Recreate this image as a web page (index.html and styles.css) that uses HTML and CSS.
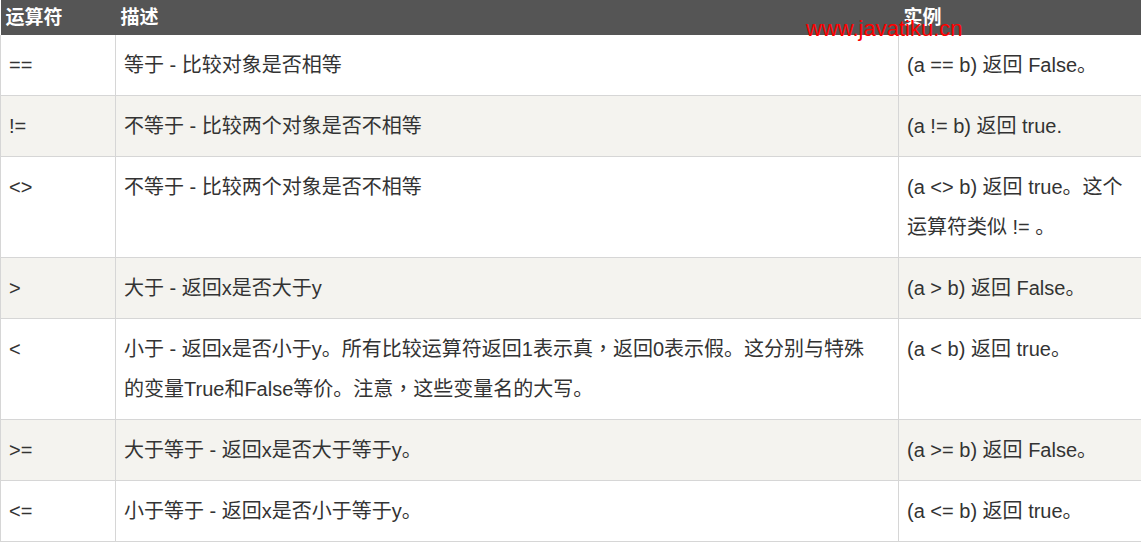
FILE: index.html
```html
<!DOCTYPE html>
<html lang="zh-CN">
<head>
<meta charset="utf-8">
<title>比较运算符</title>
<link rel="stylesheet" href="styles.css">
</head>
<body>
<div class="wrap">
  <table class="ops">
    <colgroup>
      <col class="c-op">
      <col class="c-desc">
      <col class="c-ex">
    </colgroup>
    <thead>
      <tr><th>运算符</th><th>描述</th><th>实例</th></tr>
    </thead>
    <tbody>
      <tr><td>==</td><td>等于 - 比较对象是否相等</td><td>(a == b) 返回 False。</td></tr>
      <tr><td>!=</td><td>不等于 - 比较两个对象是否不相等</td><td>(a != b) 返回 true.</td></tr>
      <tr><td>&lt;&gt;</td><td>不等于 - 比较两个对象是否不相等</td><td>(a &lt;&gt; b) 返回 true。这个<br>运算符类似 != 。</td></tr>
      <tr><td>&gt;</td><td>大于 - 返回x是否大于y</td><td>(a &gt; b) 返回 False。</td></tr>
      <tr><td>&lt;</td><td>小于 - 返回x是否小于y。所有比较运算符返回1表示真<span class="punct" lang="zh-TW">，</span>返回0表示假。这分别与特殊<br>的变量True和False等价。注意<span class="punct" lang="zh-TW">，</span>这些变量名的大写。</td><td>(a &lt; b) 返回 true。</td></tr>
      <tr><td>&gt;=</td><td>大于等于 - 返回x是否大于等于y。</td><td>(a &gt;= b) 返回 False。</td></tr>
      <tr><td>&lt;=</td><td>小于等于 - 返回x是否小于等于y。</td><td>(a &lt;= b) 返回 true。</td></tr>
    </tbody>
  </table>
  <div class="watermark">www.javatiku.cn</div>
</div>
</body>
</html>
```

FILE: styles.css
```css
html, body {
  margin: 0;
  padding: 0;
  background: #fff;
  overflow: hidden;
}

.wrap {
  position: relative;
  width: 1141px;
  overflow: hidden;
}

.ops {
  border-collapse: collapse;
  table-layout: fixed;
  width: 1160px;
  font-family: "Liberation Sans", Arial, "Noto Sans CJK SC", sans-serif;
  color: #333;
}

.c-op { width: 115px; }
.c-desc { width: 783px; }
.c-ex { width: 262px; }

.ops th {
  background: #555;
  color: #fff;
  font-size: 19px;
  font-weight: bold;
  text-align: left;
  height: 34px;
  padding: 1px 5px 0;
  line-height: 32px;
  vertical-align: middle;
  border: none;
}

.ops td {
  font-size: 20px;
  line-height: 40px;
  padding: 10px 8px;
  vertical-align: top;
  border: 1px solid #d6d6d6;
}

.ops thead + tbody tr:first-child td {
  border-top: none;
}

.ops tbody tr:nth-child(even) td {
  background: #f4f3ef;
}

.punct {
  font-family: "Noto Sans CJK TC", sans-serif;
  line-height: 1;
}

.watermark {
  position: absolute;
  left: 806px;
  top: 18px;
  font-family: "Liberation Sans", Arial, sans-serif;
  font-size: 22px;
  line-height: 1;
  color: #ff0000;
  white-space: nowrap;
}
```
